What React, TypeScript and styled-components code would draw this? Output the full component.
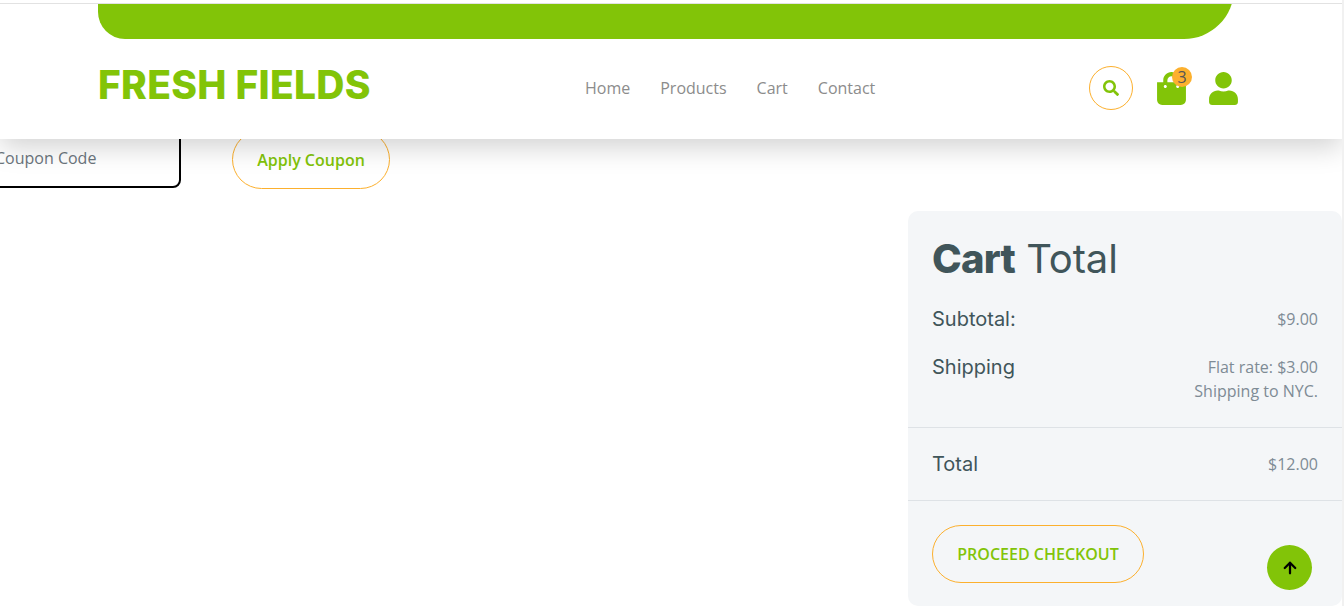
import React from 'react';
import styled, {createGlobalStyle} from 'styled-components';
import {FaSearch, FaShoppingBag, FaUser} from 'react-icons/fa';
import {FiArrowUp} from 'react-icons/fi';

const GREEN = '#82c408';
const ORANGE = '#fcb02e';
const SLATE = '#40555a';
const MUTED = '#7e8b95';
const HEADING_FONT = 'Inter, Lato, "Liberation Sans", sans-serif';

const GlobalStyle = createGlobalStyle`
  html, body {
    margin: 0;
    height: 606px;
    overflow: hidden;
    background: #fff;
  }
  * {
    box-sizing: border-box;
  }
  body {
    font-family: "Open Sans", "Liberation Sans", sans-serif;
  }
`;

const NAV_LINKS = ['Home', 'Products', 'Cart', 'Contact'];

function App() {
  return (
    <Page>
      <GlobalStyle />
      <Header>
        <TopRule />
        <HeaderInner>
          <BarClip>
            <TopBar />
          </BarClip>
          <HeaderRow>
            <Logo>FRESH FIELDS</Logo>
            <Nav>
              {NAV_LINKS.map((link) => (
                <NavLink key={link}>{link}</NavLink>
              ))}
            </Nav>
            <Actions>
              <SearchButton>
                <FaSearch size={16} />
              </SearchButton>
              <BagIcon>
                <FaShoppingBag size={33} />
                <Badge>3</Badge>
              </BagIcon>
              <UserIcon>
                <FaUser size={33} />
              </UserIcon>
            </Actions>
          </HeaderRow>
        </HeaderInner>
      </Header>

      <CouponRow>
        <CouponInput>Coupon Code</CouponInput>
        <ApplyButton>Apply Coupon</ApplyButton>
      </CouponRow>

      <CartTotal>
        <CartTitle>
          <strong>Cart</strong> Total
        </CartTitle>
        <TotalsTop>
          <Row>
            <Label>Subtotal:</Label>
            <Value>$9.00</Value>
          </Row>
          <Row>
            <Label>Shipping</Label>
            <Value>
              Flat rate: $3.00
              <br />
              Shipping to NYC.
            </Value>
          </Row>
        </TotalsTop>
        <TotalRow>
          <Label>Total</Label>
          <Value>$12.00</Value>
        </TotalRow>
        <CheckoutArea>
          <CheckoutButton>PROCEED CHECKOUT</CheckoutButton>
        </CheckoutArea>
      </CartTotal>

      <ScrollTop>
        <FiArrowUp size={18} strokeWidth={3} />
      </ScrollTop>
    </Page>
  );
}

export default App;

const Page = styled.div`
  position: relative;
  width: 1344px;
  height: 606px;
  overflow: hidden;
  padding-top: 130px;
  border-right: 2px solid #f1f1f1;
`;

const Header = styled.header`
  position: absolute;
  top: 0;
  left: 0;
  width: 100%;
  height: 139px;
  padding-top: 3px;
  background: #fff;
  box-shadow: 0 8px 26px rgba(0, 0, 0, 0.18);
  z-index: 3;
`;

const TopRule = styled.div`
  height: 1px;
  background: #e2e2e2;
`;

const HeaderInner = styled.div`
  padding: 0 98px;
`;

const BarClip = styled.div`
  display: flex;
  align-items: flex-end;
  height: 35px;
  overflow: hidden;
`;

const TopBar = styled.div`
  flex-shrink: 0;
  width: 1136px;
  height: 60px;
  background: ${GREEN};
  border-radius: 0 0 50px 27px;
`;

const HeaderRow = styled.div`
  display: flex;
  align-items: center;
  height: 90px;
`;

const Logo = styled.div`
  width: 487px;
  font-family: ${HEADING_FONT};
  font-size: 39px;
  font-weight: 800;
  letter-spacing: 0.25px;
  color: ${GREEN};
  white-space: nowrap;
`;

const Nav = styled.nav`
  display: flex;
  gap: 30px;
  width: 504px;
  padding-top: 8px;
`;

const NavLink = styled.a`
  font-size: 16px;
  color: #8c8c8c;
`;

const Actions = styled.div`
  display: flex;
  align-items: center;
  padding-top: 8px;
`;

const SearchButton = styled.div`
  display: flex;
  align-items: center;
  justify-content: center;
  width: 44px;
  height: 44px;
  border: 1px solid ${ORANGE};
  border-radius: 50%;
  color: ${GREEN};
`;

const BagIcon = styled.div`
  position: relative;
  display: flex;
  margin-left: 22px;
  color: ${GREEN};
`;

const Badge = styled.span`
  position: absolute;
  top: -5px;
  right: -4px;
  width: 20px;
  height: 20px;
  border-radius: 50%;
  background: ${ORANGE};
  color: #555;
  font-size: 16px;
  line-height: 20px;
  text-align: center;
`;

const UserIcon = styled.div`
  display: flex;
  margin-left: 19px;
  color: ${GREEN};
`;

const CouponRow = styled.div`
  display: flex;
  align-items: flex-start;
  height: 59px;
  margin-left: -40px;
`;

const CouponInput = styled.div`
  width: 221px;
  height: 58px;
  border: 2px solid #000;
  border-radius: 8px;
  padding: 15px 0 0 33px;
  font-size: 16px;
  line-height: 22px;
  color: #6c757d;
`;

const ApplyButton = styled.button`
  width: 158px;
  height: 59px;
  margin-left: 51px;
  background: #fff;
  border: 1px solid ${ORANGE};
  border-radius: 30px;
  color: ${GREEN};
  font-family: inherit;
  font-size: 16px;
  font-weight: 600;
`;

const CartTotal = styled.section`
  width: 434px;
  height: 395px;
  margin: 22px 0 0 908px;
  background: #f4f6f8;
  border-radius: 10px;
`;

const CartTitle = styled.h2`
  margin: 0;
  padding: 24px 24px 0;
  font-family: ${HEADING_FONT};
  font-size: 40px;
  font-weight: 400;
  letter-spacing: -0.1px;
  line-height: 48px;
  color: ${SLATE};

  strong {
    font-weight: 800;
    letter-spacing: -0.8px;
  }
`;

const TotalsTop = styled.div`
  height: 145px;
  padding: 24px 24px 0;
  border-bottom: 1px solid #dee2e6;
`;

const Row = styled.div`
  display: flex;
  justify-content: space-between;
  align-items: flex-start;
  margin-bottom: 24px;
`;

const Label = styled.span`
  font-family: ${HEADING_FONT};
  font-size: 20px;
  font-weight: 400;
  line-height: 24px;
  color: ${SLATE};
`;

const Value = styled.span`
  font-size: 16px;
  line-height: 24px;
  color: ${MUTED};
  text-align: right;
`;

const TotalRow = styled.div`
  display: flex;
  justify-content: space-between;
  align-items: center;
  height: 73px;
  padding: 0 24px;
  border-bottom: 1px solid #dee2e6;
`;

const CheckoutArea = styled.div`
  padding: 24px;
`;

const CheckoutButton = styled.button`
  width: 212px;
  height: 58px;
  background: transparent;
  border: 1px solid ${ORANGE};
  border-radius: 30px;
  color: ${GREEN};
  font-family: inherit;
  font-size: 16px;
  font-weight: 600;
`;

const ScrollTop = styled.button`
  position: absolute;
  top: 545px;
  left: 1267px;
  display: flex;
  align-items: center;
  justify-content: center;
  width: 45px;
  height: 45px;
  padding: 0;
  border: none;
  border-radius: 50%;
  background: ${GREEN};
  color: #000;
`;
